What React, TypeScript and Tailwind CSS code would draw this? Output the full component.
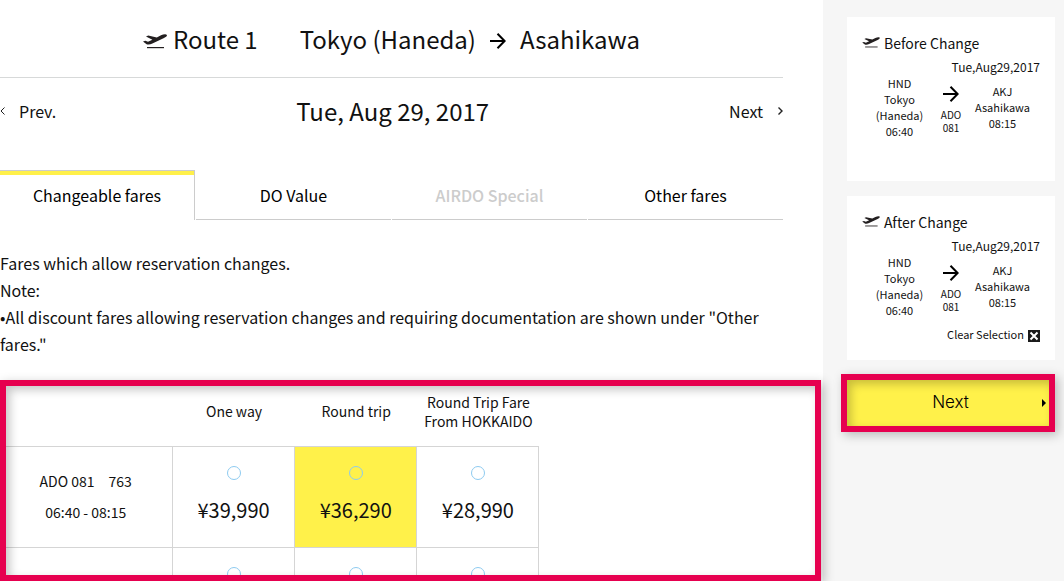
import { clsx } from 'clsx';

const tabs = [
  { label: 'Changeable fares', active: true, disabled: false },
  { label: 'DO Value', active: false, disabled: false },
  { label: 'AIRDO Special', active: false, disabled: true },
  { label: 'Other fares', active: false, disabled: false },
];

const flights = [
  { no: 'ADO 081', plane: '763', time: '06:40 - 08:15', fares: ['¥39,990', '¥36,290', '¥28,990'], selected: 1 },
  { no: 'ADO 083', plane: '763', time: '10:50 - 12:30', fares: ['¥39,990', '¥36,290', '¥28,990'], selected: -1 },
];

function PlaneIcon({ className }: { className?: string }) {
  return (
    <svg viewBox="0 0 24 15" className={className} fill="#231f20" aria-hidden="true">
      <path d="M0 7.6 2.4 6.8 5 7.8 9.4 5.8 3 2.6 5.2 1.6 13.8 3.4 18 1.2C20.4.1 23.2-.2 23.9.9 24.3 2 23 3.2 21 4L9.4 9.6C7.4 10.6 5 10.9 3.6 10.2Z" />
      <path d="M4 13h17v1.2H4z" />
    </svg>
  );
}

function ArrowIcon({ className }: { className?: string }) {
  return (
    <svg viewBox="0 0 16 16" className={className} fill="none" stroke="#000" strokeWidth="2" aria-hidden="true">
      <path d="M0 8h15M7.5 .8 14.6 8l-7.1 7.2" />
    </svg>
  );
}

function TripCard({ title, clearable }: { title: string; clearable?: boolean }) {
  return (
    <section className="min-h-41 bg-white px-[15px] pt-3.5">
      <h2 className="flex items-center gap-1 text-sm leading-6">
        <PlaneIcon className="mb-0.5 h-[11px] w-[18px]" />
        {title}
      </h2>
      <p className="text-right text-xs leading-6">Tue,Aug29,2017</p>
      <div className="-mt-1 flex justify-between text-center text-[11px] leading-4">
        <div className="w-[75px]">
          HND
          <br />
          Tokyo
          <br />
          (Haneda)
          <br />
          06:40
        </div>
        <div className="flex flex-col items-center pt-[11px] text-[10px] leading-[13px]">
          <ArrowIcon className="mb-1.5 size-4" />
          <span>ADO</span>
          <span>081</span>
        </div>
        <div className="w-[75px] pt-2">
          AKJ
          <br />
          Asahikawa
          <br />
          08:15
        </div>
      </div>
      {clearable && (
        <button type="button" className="mt-1.5 ml-auto flex items-center gap-1 text-[11px] leading-5">
          Clear Selection
          <svg viewBox="0 0 12 12" className="mt-1 size-3" aria-hidden="true">
            <path d="M0 0h12v12H0z" fill="#1a1a1a" />
            <path d="m2.5 2.5 7 7m0-7-7 7" stroke="#fff" strokeWidth="2" />
          </svg>
        </button>
      )}
    </section>
  );
}

export default function App() {
  return (
    <div className="flex h-screen overflow-hidden bg-[#f6f6f6] font-['Noto_Sans_CJK_JP',sans-serif] text-[#111]">
      <main className="relative z-10 flex min-w-0 flex-1 flex-col bg-white">
        <h1 className="mr-10 flex h-[78px] shrink-0 items-center justify-center border-b border-[#d7d9d9] text-2xl leading-8">
          <PlaneIcon className="mt-1.5 mr-1.5 h-[15px] w-6" />
          Route 1<span className="ml-10.5">Tokyo (Haneda)</span>
          <ArrowIcon className="mx-3.5 mt-1 size-4" />
          Asahikawa
        </h1>

        <div className="mr-10 flex h-[92px] shrink-0 items-start justify-between pt-[17px]">
          <a href="#prev" className="flex items-center gap-3.5 leading-8">
            <svg viewBox="0 0 5 8" className="h-2 w-[5px]" fill="none" stroke="#222" aria-hidden="true">
              <path d="M4.5.5 1 4l3.5 3.5" />
            </svg>
            Prev.
          </a>
          <p className="text-2xl leading-8">Tue, Aug 29, 2017</p>
          <a href="#next" className="flex items-center gap-[15px] leading-8">
            Next
            <svg viewBox="0 0 5 8" className="h-2 w-[5px]" fill="none" stroke="#222" strokeWidth="1.4" aria-hidden="true">
              <path d="M.5.5 4 4 .5 7.5" />
            </svg>
          </a>
        </div>

        <div role="tablist" className="mr-10 grid h-[50px] shrink-0 grid-cols-4 gap-px">
          {tabs.map((tab) => (
            <button
              key={tab.label}
              type="button"
              role="tab"
              aria-selected={tab.active}
              disabled={tab.disabled}
              className={clsx(
                'border-[#ccc] text-base',
                tab.active ? 'border-t border-r pb-0.5 shadow-[inset_0_4px_#fff04a]' : 'border-b pt-px',
                tab.disabled ? 'font-medium text-[#ccc]' : 'text-black',
              )}
            >
              {tab.label}
            </button>
          ))}
        </div>

        <div className="mt-[30px] mr-10 mb-[22px] shrink-0 leading-[27px]">
          <p>Fares which allow reservation changes.</p>
          <p>Note:</p>
          <p>•All discount fares allowing reservation changes and requiring documentation are shown under "Other fares."</p>
        </div>

        <div className="relative mr-0.5 min-h-0 flex-1 overflow-hidden border-6 border-[#e6004f] shadow-[3px_3px_10px_rgba(0,0,0,0.25)]">
          <table className="w-[533px] table-fixed border-collapse text-center text-sm">
            <thead>
              <tr className="h-15 leading-[19px]">
                <th className="w-[166px]" aria-label="Flight" />
                <th className="pt-1 pb-3 pl-0.5 font-normal">One way</th>
                <th className="pt-1 pb-3 pl-0.5 font-normal">Round trip</th>
                <th className="pt-1 pb-3 pl-0.5 font-normal">
                  Round Trip Fare
                  <br />
                  From HOKKAIDO
                </th>
              </tr>
            </thead>
            <tbody>
              {flights.map((flight) => (
                <tr key={flight.no} className="h-[101px] border-y border-[#d5d5d5]">
                  <td className="border-r border-[#d5d5d5] pr-1.5 leading-[31px]">
                    <span className="mr-3.5">{flight.no}</span>
                    {flight.plane}
                    <br />
                    {flight.time}
                  </td>
                  {flight.fares.map((fare, i) => (
                    <td key={i} className={clsx('border-r border-[#d5d5d5] pb-0.5 pl-px', i === flight.selected && 'bg-[#fff14a]')}>
                      <label className="flex flex-col items-center gap-3.5">
                        <input
                          type="radio"
                          name="fare"
                          className="size-3.5 appearance-none rounded-full border border-[#8ecbf0] checked:bg-[#8ecbf0]"
                        />
                        <span className="text-xl leading-8">{fare}</span>
                      </label>
                    </td>
                  ))}
                </tr>
              ))}
            </tbody>
          </table>
          <div className="pointer-events-none absolute inset-0 shadow-[inset_4px_4px_10px_rgba(0,0,0,0.22)]" />
        </div>
      </main>

      <aside className="flex w-[241px] shrink-0 flex-col gap-[15px] pt-[17px] pr-[9px] pl-6">
        <TripCard title="Before Change" />
        <TripCard title="After Change" clearable />
        <button
          type="button"
          className="-mt-px -ml-1.5 flex h-[58px] items-center border-6 border-[#e6004f] bg-[#fff14a] pr-[3px] font-['Inter',sans-serif] text-[17px] font-light text-black shadow-[3px_3px_10px_rgba(0,0,0,0.25),inset_4px_4px_10px_rgba(0,0,0,0.22)]"
        >
          <span className="flex-1 pl-3">Next</span>
          <svg viewBox="0 0 4 8" className="h-2 w-1" aria-hidden="true">
            <path d="M0 0 4 4 0 8z" />
          </svg>
        </button>
      </aside>
    </div>
  );
}
